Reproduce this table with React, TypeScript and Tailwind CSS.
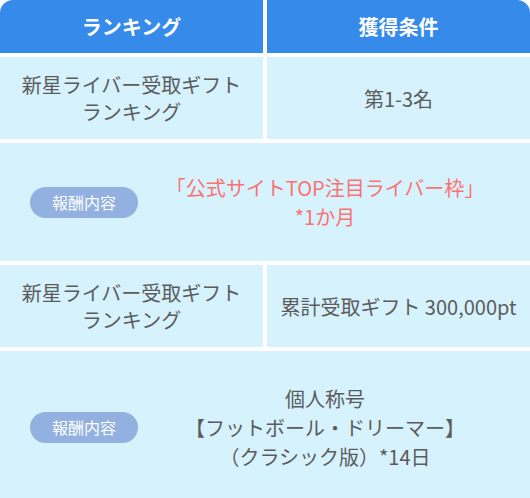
import React from "react";

const font = { fontFamily: '"Noto Sans CJK JP", "Noto Sans", sans-serif' };

function Badge() {
  return (
    <div className="flex h-[31px] w-[108px] shrink-0 items-center justify-center rounded-full bg-[#92b0e0] text-[16px] text-white">
      報酬内容
    </div>
  );
}

export default function App() {
  return (
    <div className="min-h-[498px] w-[530px] bg-white" style={font}>
      <div className="grid grid-cols-2 gap-1 overflow-hidden rounded-t-[13px]">
        <div className="flex h-[53px] items-center justify-center bg-[#368bea] text-[20px] font-bold text-white">
          ランキング
        </div>
        <div className="flex h-[53px] items-center justify-center bg-[#368bea] text-[20px] font-bold text-white">
          獲得条件
        </div>

        <div className="flex h-[82px] items-center justify-center bg-[#d6f2fd] text-center text-[20px] leading-[27px] text-[#5c5c5c]">
          新星ライバー受取ギフト
          <br />
          ランキング
        </div>
        <div className="flex h-[82px] items-center justify-center bg-[#d6f2fd] text-center text-[20px] leading-[27px] text-[#5c5c5c]">
          第1-3名
        </div>

        <div className="col-span-2 flex h-[118px] items-center bg-[#d6f2fd] pl-[30px] pr-[18px]">
          <Badge />
          <div className="flex-1 text-center text-[20px] leading-[29px] text-[#fa7272]">
            「公式サイトTOP注目ライバー枠」
            <br />
            *1か月
          </div>
        </div>

        <div className="flex h-[82px] items-center justify-center bg-[#d6f2fd] text-center text-[20px] leading-[27px] text-[#5c5c5c]">
          新星ライバー受取ギフト
          <br />
          ランキング
        </div>
        <div className="flex h-[82px] items-center justify-center bg-[#d6f2fd] text-center text-[20px] leading-[27px] text-[#5c5c5c]">
          累計受取ギフト 300,000pt
        </div>

        <div className="col-span-2 flex h-[152px] items-center bg-[#d6f2fd] pl-[30px] pr-[18px]">
          <Badge />
          <div className="flex-1 text-center text-[20px] leading-[29px] text-[#5c5c5c]">
            個人称号
            <br />
            【フットボール・ドリーマー】
            <br />
            （クラシック版）*14日
          </div>
        </div>
      </div>
    </div>
  );
}
